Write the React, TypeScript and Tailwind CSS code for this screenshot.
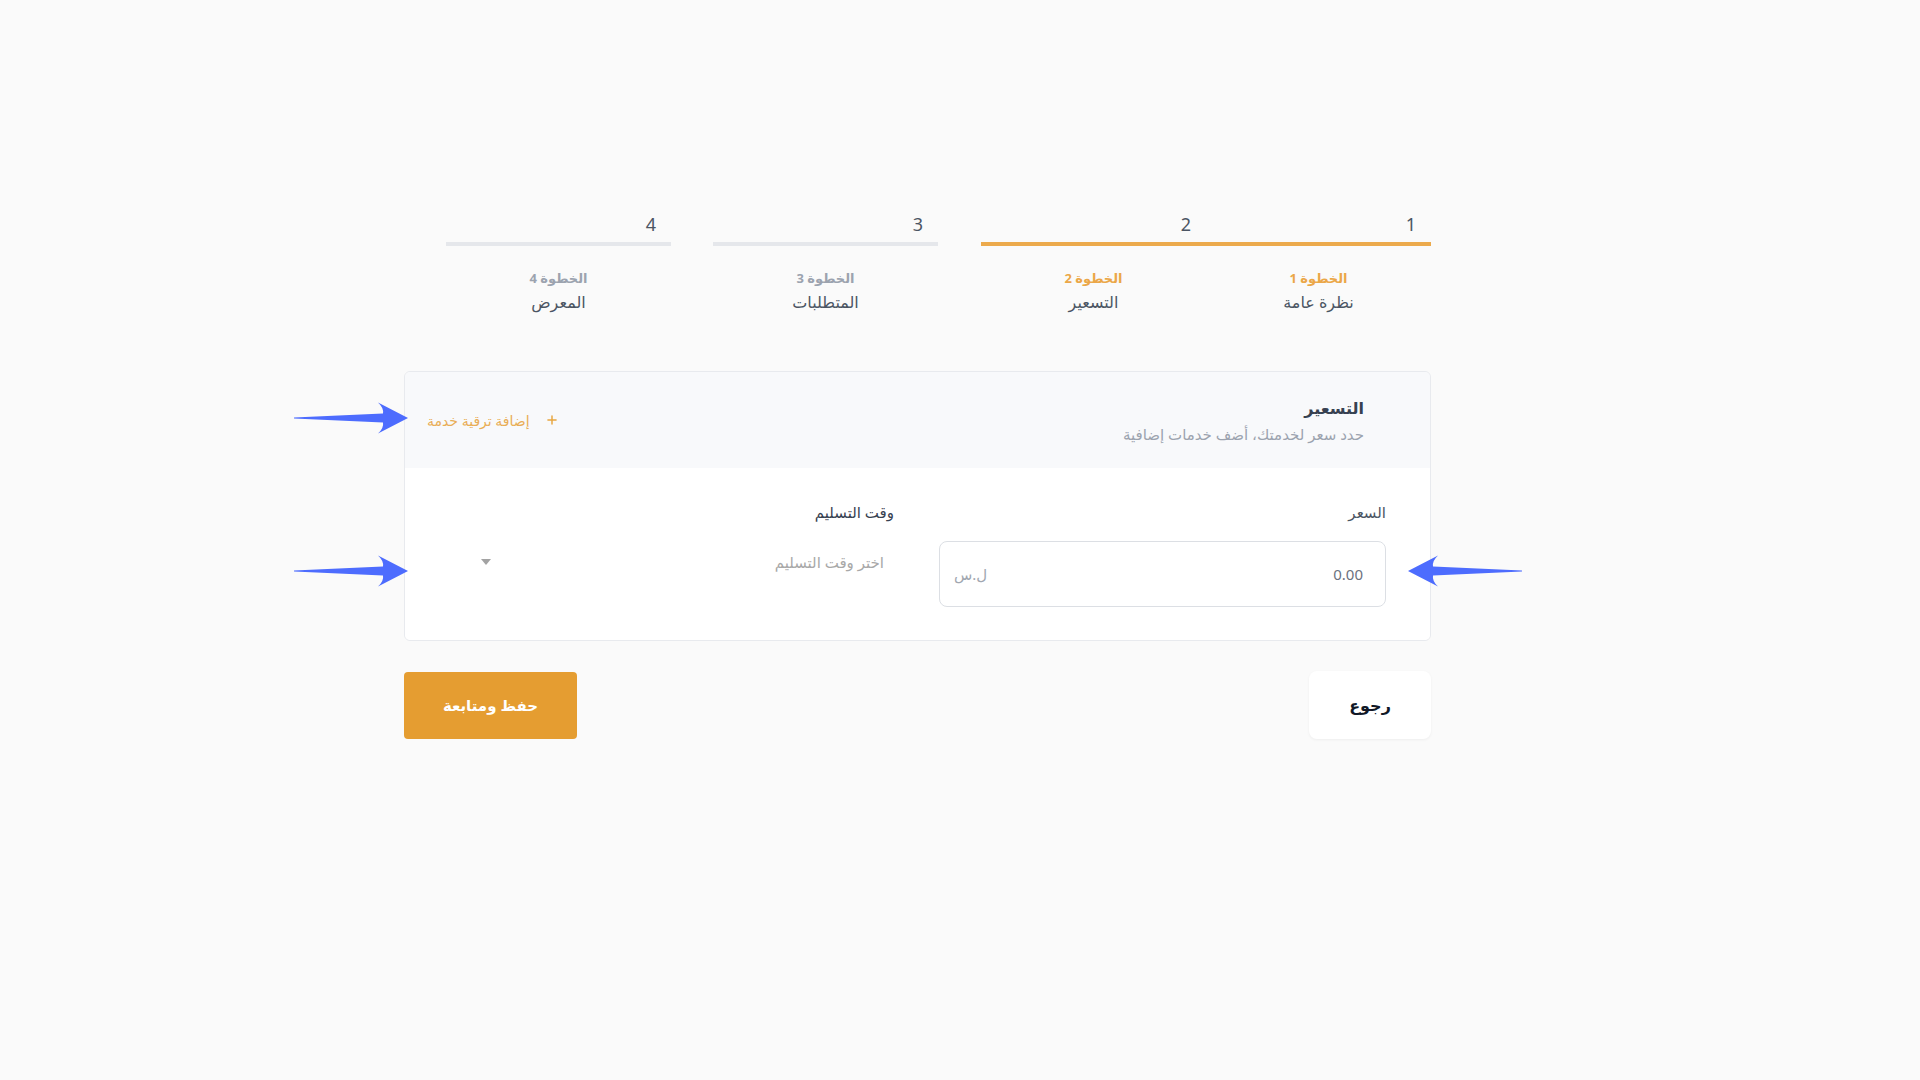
import { Plus } from "lucide-react";

const steps = [
  { n: 1, label: "الخطوة 1", title: "نظرة عامة", done: true, gap: "" },
  { n: 2, label: "الخطوة 2", title: "التسعير", done: true, gap: "ml-[43px]" },
  { n: 3, label: "الخطوة 3", title: "المتطلبات", done: false, gap: "ml-[42px]" },
  { n: 4, label: "الخطوة 4", title: "المعرض", done: false, gap: "" },
];

function Arrow({ className }: { className: string }) {
  return (
    <svg
      className={className}
      width="114"
      height="32"
      viewBox="0 0 114 32"
      fill="#4d6cfe"
    >
      <path d="M0 15.4 L89 11.5 Q90 6 84 0.5 L114 16 L84 31.5 Q90 26 89 20.5 L0 16.6 Z" />
    </svg>
  );
}

export default function App() {
  return (
    <div
      className="relative min-h-screen w-full bg-[#fafafa]"
      style={{ fontFamily: '"Noto Sans", "DejaVu Sans", sans-serif' }}
    >
      <div dir="rtl" className="ml-[404px] w-[1027px] pt-[212px]">
        {/* Stepper */}
        <div className="flex pl-[42px]">
          {steps.map((s) => (
            <div key={s.n} className={`w-[225px] ${s.gap}`}>
              <div className="pr-[15px] text-[18px] leading-[24px] text-[#4b5563]">
                {s.n}
              </div>
              <div
                className={`mt-[6px] h-[4px] ${
                  s.done ? "bg-[#ecaa4c]" : "bg-[#e5e7eb]"
                }`}
              />
              <div
                className={`mt-[22px] text-center text-[13px] font-bold leading-[20px] ${
                  s.done ? "text-[#eba748]" : "text-[#9ca3af]"
                }`}
              >
                {s.label}
              </div>
              <div className="mt-[2px] text-center text-[16px] leading-[24px] text-[#4b5563]">
                {s.title}
              </div>
            </div>
          ))}
        </div>

        {/* Pricing card */}
        <div className="mt-[57px] w-[1027px] overflow-hidden rounded-md border border-[#e8eaee]">
          <div className="flex h-[96px] items-center justify-between bg-[#f8f9fb] pl-[22px] pr-[66px]">
            <div className="flex flex-col gap-[4px]">
              <h2 className="text-[16px] font-bold leading-[24px] text-[#374151]">
                التسعير
              </h2>
              <p className="text-[15px] leading-[20px] text-[#9ca3af]">
                حدد سعر لخدمتك، أضف خدمات إضافية
              </p>
            </div>
            <button className="flex items-center gap-[15px] text-[14px] text-[#e9ad55]">
              <Plus size={14} strokeWidth={2.5} className="text-[#e8a640]" />
              <span>إضافة ترقية خدمة</span>
            </button>
          </div>

          <div className="grid grid-cols-2 gap-[43px] bg-white pb-[33px] pl-[44px] pr-[44px] pt-[32px]">
            <div>
              <label className="block text-[15px] leading-[24px] text-[#4b5563]">
                السعر
              </label>
              <div className="mt-[17px] flex h-[66px] items-center justify-between rounded-lg border border-[#dcdfe4] pl-[14px] pr-[22px]">
                <span className="text-[15px] text-[#6b7280]">0.00</span>
                <span className="text-[15px] text-[#a1a7b0]">ل.س</span>
              </div>
            </div>
            <div>
              <label className="block pr-[2px] text-[15px] leading-[24px] text-[#374151]">
                وقت التسليم
              </label>
              <div className="mt-[17px] flex h-[42px] items-center justify-between pl-[32px] pr-[12px]">
                <span className="text-[15px] text-[#a8a8a8]">اختر وقت التسليم</span>
                <svg width="10" height="6" viewBox="0 0 10 6" fill="#a3a3a3">
                  <path d="M0 0 H10 L5 6 Z" />
                </svg>
              </div>
            </div>
          </div>
        </div>

        {/* Actions */}
        <div className="mt-[30px] flex w-[1027px] items-center justify-between">
          <button className="h-[68px] w-[122px] rounded-lg bg-white text-[16px] font-bold text-[#111827] shadow-[0_1px_3px_rgba(0,0,0,0.05)]">
            رجوع
          </button>
          <button className="h-[67px] w-[173px] rounded bg-[#e59d31] text-[15px] font-bold text-white">
            حفظ ومتابعة
          </button>
        </div>
      </div>

      {/* annotation arrows */}
      <Arrow className="absolute left-[294px] top-[402px]" />
      <Arrow className="absolute left-[294px] top-[555px]" />
      <Arrow className="absolute left-[1408px] top-[555px] -scale-x-100" />
    </div>
  );
}
